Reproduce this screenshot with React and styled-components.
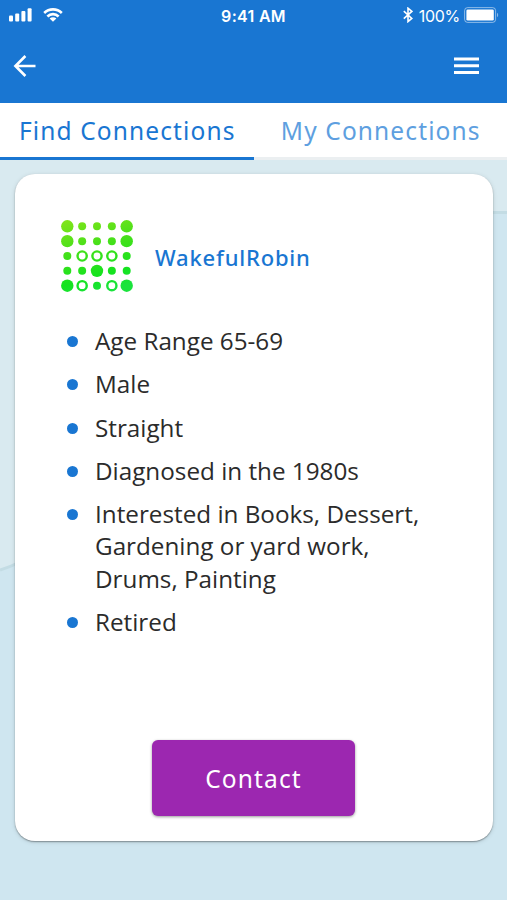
import styled, { createGlobalStyle } from "styled-components";

const GlobalStyle = createGlobalStyle`
  * {
    box-sizing: border-box;
  }

  body {
    margin: 0;
    font-family: "Open Sans", "Noto Sans", sans-serif;
    color: #2b2b2b;
  }
`;

const Screen = styled.div`
  position: relative;
  isolation: isolate;
  width: 507px;
  height: 900px;
  display: flex;
  flex-direction: column;
  overflow: hidden;
  background-color: #cfe6f0;
`;

const Backdrop = styled.svg`
  position: absolute;
  z-index: -1;
  inset: 0;
`;

const Header = styled.header`
  height: 103px;
  background-color: #1976d2;
  color: #fff;
`;

const StatusBar = styled.div`
  height: 32px;
  display: grid;
  grid-template-columns: 1fr auto 1fr;
  align-items: center;
  padding: 0 8px 0 9px;
  font-family: Inter, sans-serif;
`;

const StatusGroup = styled.div`
  display: flex;
  align-items: center;
  justify-content: ${({ $end }) => ($end ? "flex-end" : "flex-start")};
  padding-bottom: ${({ $end }) => ($end ? "2px" : "3px")};
`;

const Signal = styled.svg`
  margin-right: 11px;
`;

const Clock = styled.span`
  font-size: 16px;
  font-weight: 600;
  letter-spacing: 0.3px;
  margin-right: 1px;
`;

const BatteryLevel = styled.span`
  margin: 2px 4px 0 6px;
  font-size: 16px;
  letter-spacing: -0.3px;
`;

const AppBar = styled.div`
  height: 68px;
  display: flex;
  align-items: center;
  justify-content: space-between;
  padding: 0 28px 0 12px;
`;

const IconButton = styled.button`
  display: flex;
  padding: 0;
  border: none;
  background: none;
  color: inherit;
  cursor: pointer;
`;

const Tabs = styled.nav`
  display: flex;
  height: 57px;
  background-color: #fff;
`;

const Tab = styled.button`
  flex: 1;
  padding: 1px 0 0 1px;
  border: none;
  border-bottom: 3px solid ${({ $active }) => ($active ? "#1976d2" : "#ebeff1")};
  background: none;
  color: ${({ $active }) => ($active ? "#1976d2" : "#5e9fe0")};
  font: 400 24.5px "Noto Sans", sans-serif;
  letter-spacing: 1.12px;
  white-space: nowrap;
  cursor: pointer;
`;

const Card = styled.main`
  display: flex;
  flex-direction: column;
  height: 667px;
  margin: 13.5px 14px 0 14.5px;
  padding: 45.5px 46px 25px 45.5px;
  border-radius: 20px;
  background-color: #fff;
  box-shadow: 0 1px 1.5px rgba(0, 0, 0, 0.35), 0 1px 5px rgba(0, 0, 0, 0.12);
`;

const Profile = styled.div`
  display: flex;
  align-items: center;
  gap: 21px;
`;

const Username = styled.h1`
  margin: 0;
  padding-top: 1px;
  color: #1976d2;
  font: 500 22px "Noto Sans", sans-serif;
  letter-spacing: 0.8px;
`;

const Facts = styled.ul`
  display: flex;
  flex-direction: column;
  gap: 11px;
  margin: 32px 0 0;
  padding: 0;
  list-style: none;
`;

const Fact = styled.li`
  display: flex;
  gap: 17px;
  padding-left: 7px;
  font-size: 24.25px;
  line-height: 32.3px;
  white-space: pre-line;

  &::before {
    content: "";
    flex: none;
    width: 11px;
    height: 11px;
    margin-top: 11px;
    border-radius: 50%;
    background-color: #1976d2;
  }
`;

const ContactButton = styled.button`
  align-self: center;
  width: 203px;
  height: 76px;
  margin-top: auto;
  padding: 1px 0 0;
  border: none;
  border-radius: 6px;
  background-color: #9c27b0;
  box-shadow: 0 1px 3px rgba(0, 0, 0, 0.4);
  color: #fff;
  font: 400 24.5px "Noto Sans", sans-serif;
  letter-spacing: 1.12px;
  cursor: pointer;
`;

// L = large dot, s = small dot, o = ring
const avatarRows = ["LsssL", "LsssL", "sooos", "ssLss", "LosoL"];

const facts = [
  "Age Range 65-69",
  "Male",
  "Straight",
  "Diagnosed in the 1980s",
  "Interested in Books, Dessert,\nGardening or yard work,\nDrums, Painting",
  "Retired",
];

function Avatar() {
  return (
    <svg width="74" height="74" viewBox="0 0 74 74">
      <defs>
        <linearGradient id="avatar" gradientUnits="userSpaceOnUse" x1="15" y1="0" x2="35" y2="74">
          <stop offset="0" stopColor="#7ee41a" />
          <stop offset="0.4" stopColor="#46e01a" />
          <stop offset="0.8" stopColor="#14e31f" />
          <stop offset="1" stopColor="#1ae33c" />
        </linearGradient>
      </defs>
      {avatarRows.map((row, y) =>
        row.split("").map((dot, x) => {
          const cx = 7.3 + x * 14.85;
          const cy = 7.3 + y * 14.85;
          const key = `${x}-${y}`;
          if (dot === "o") {
            return (
              <circle key={key} cx={cx} cy={cy} r="4.6" fill="none" stroke="url(#avatar)" strokeWidth="2.4" />
            );
          }
          return <circle key={key} cx={cx} cy={cy} r={dot === "L" ? 6.2 : 4} fill="url(#avatar)" />;
        })
      )}
    </svg>
  );
}

function SignalIcon() {
  return (
    <Signal width="23" height="14" viewBox="0 0 23 14" fill="currentColor">
      <rect x="0" y="7.5" width="4" height="6" rx="1" />
      <rect x="6.2" y="5.5" width="4" height="8" rx="1" />
      <rect x="12.4" y="3" width="4" height="10.5" rx="1" />
      <rect x="18.6" y="0.3" width="4" height="13.2" rx="1" />
    </Signal>
  );
}

function WifiIcon() {
  return (
    <svg width="20" height="14" viewBox="0 0 20 14" fill="none" stroke="currentColor" strokeWidth="2.6">
      <path d="M1.2 5a12.6 12.6 0 0 1 17.6 0" />
      <path d="M4.4 8.5a7.9 7.9 0 0 1 11.2 0" />
      <path d="M10 13.7L6.6 10.6a4.9 4.9 0 0 1 6.8 0z" fill="currentColor" stroke="none" />
    </svg>
  );
}

function BluetoothIcon() {
  return (
    <svg width="10" height="16" viewBox="0 0 10 16" fill="none" stroke="currentColor" strokeWidth="1.6">
      <path d="M0.8 4.2L8.8 11.4L5 14.6V1.2L8.8 4.4L0.8 11.6" />
    </svg>
  );
}

function BatteryIcon() {
  return (
    <svg width="35" height="16" viewBox="0 0 35 16">
      <rect x="0.6" y="0.6" width="31" height="14.8" rx="3" fill="none" stroke="#fff" strokeOpacity="0.5" />
      <rect x="2.4" y="2.4" width="27.4" height="11.2" rx="1.4" fill="#fff" />
      <path d="M33 5.8a2.6 2.6 0 0 1 0 4.4z" fill="#fff" fillOpacity="0.5" />
    </svg>
  );
}

export default function App() {
  return (
    <>
      <GlobalStyle />
      <Screen>
        <Backdrop width="507" height="900" viewBox="0 0 507 900">
          <path d="M0 160H507V212H480L20 563L0 570Z" fill="#d9eaf0" />
          <path d="M480 212.5H507M0 570Q10 567 20 562" fill="none" stroke="#c3dce4" strokeWidth="3" />
        </Backdrop>
        <Header>
          <StatusBar>
            <StatusGroup>
              <SignalIcon />
              <WifiIcon />
            </StatusGroup>
            <Clock>9:41 AM</Clock>
            <StatusGroup $end>
              <BluetoothIcon />
              <BatteryLevel>100%</BatteryLevel>
              <BatteryIcon />
            </StatusGroup>
          </StatusBar>
          <AppBar>
            <IconButton aria-label="Back">
              <svg width="24" height="22" viewBox="0 0 24 22" fill="none" stroke="currentColor" strokeWidth="2.6">
                <path d="M13.4 1L3.4 11L13.4 21M3.4 11H23.5" />
              </svg>
            </IconButton>
            <IconButton aria-label="Menu">
              <svg width="25" height="18" viewBox="0 0 25 18" fill="currentColor">
                <path d="M0 0.5H25V3.5H0zM0 7.3H25V10.3H0zM0 14H25V17H0z" />
              </svg>
            </IconButton>
          </AppBar>
        </Header>
        <Tabs>
          <Tab $active>Find Connections</Tab>
          <Tab>My Connections</Tab>
        </Tabs>
        <Card>
          <Profile>
            <Avatar />
            <Username>WakefulRobin</Username>
          </Profile>
          <Facts>
            {facts.map(fact => (
              <Fact key={fact}>{fact}</Fact>
            ))}
          </Facts>
          <ContactButton>Contact</ContactButton>
        </Card>
      </Screen>
    </>
  );
}
